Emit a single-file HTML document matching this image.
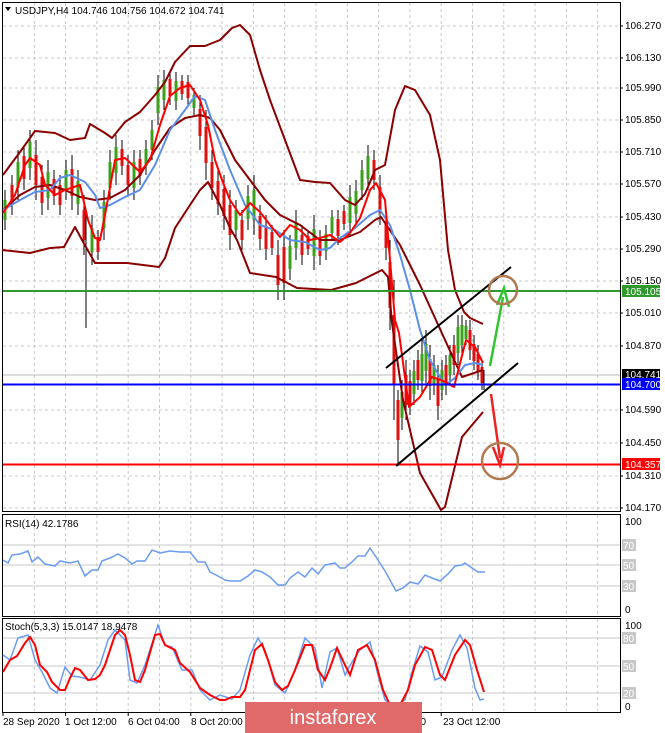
<!DOCTYPE html>
<html><head><meta charset="utf-8"><style>
html,body{margin:0;padding:0;background:#fff;width:665px;height:733px;overflow:hidden}
svg{display:block}
text{font-family:"Liberation Sans",sans-serif;font-size:10px;fill:#000}
</style></head><body>
<svg width="665" height="733" viewBox="0 0 665 733">
<!-- grid -->
<g stroke="#c8c8c8" stroke-dasharray="3,3" stroke-width="1">
<path d="M34.3 3V511M65.6 3V511M96.9 3V511M128.2 3V511M159.5 3V511M190.8 3V511M222.1 3V511M253.4 3V511M284.7 3V511M316 3V511M347.3 3V511M378.6 3V511M409.9 3V511M441.2 3V511M472.5 3V511M503.8 3V511M535.1 3V511M566.4 3V511M597.7 3V511"/>
<path d="M34.3 515V615M65.6 515V615M96.9 515V615M128.2 515V615M159.5 515V615M190.8 515V615M222.1 515V615M253.4 515V615M284.7 515V615M316 515V615M347.3 515V615M378.6 515V615M409.9 515V615M441.2 515V615M472.5 515V615M503.8 515V615M535.1 515V615M566.4 515V615M597.7 515V615"/>
<path d="M34.3 619V711M65.6 619V711M96.9 619V711M128.2 619V711M159.5 619V711M190.8 619V711M222.1 619V711M253.4 619V711M284.7 619V711M316 619V711M347.3 619V711M378.6 619V711M409.9 619V711M441.2 619V711M472.5 619V711M503.8 619V711M535.1 619V711M566.4 619V711M597.7 619V711"/>
<path d="M3 26H620M3 58H620M3 88H620M3 120H620M3 152H620M3 184H620M3 217H620M3 249H620M3 281H620M3 313H620M3 346H620M3 410H620M3 443H620M3 476H620M3 508H620"/>
</g>
<g stroke="#c8c8c8" stroke-width="1">
<path d="M3 545H620M3 565H620M3 586H620M3 638H620M3 666H620M3 693H620"/>
<path d="M3 375H620" stroke="#bbb"/>
</g>
<!-- frames -->
<g fill="none" stroke="#000" stroke-width="1">
<path d="M2.5 2.5H620.5V511.5H2.5Z"/>
<path d="M2.5 514.5H620.5V616.5H2.5Z"/>
<path d="M2.5 618.5H620.5V712.5H2.5Z"/>
</g>
<!-- candles -->
<g stroke="#000" stroke-width="1" fill="none">
<path d="M5 190V230M12 175V215M18 150V200M24 145V190M30 130V180M36 140V200M42 165V215M48 160V210M54 170V205M60 175V215M66 160V200M72 155V210M78 170V215M84 195V255M86 210V328M92 215V265M98 230V260M104 190V240M110 150V200M116 135V185M122 140V175M128 155V195M134 150V200M140 150V185M146 140V175M152 120V160M158 75V125M164 70V110M170 70V105M176 72V110M182 75V100M188 75V105M194 88V115M200 95V150M206 110V180M212 150V200M218 170V215M224 175V230M230 190V250M236 200V240M242 210V250M248 185V230M254 175V235M260 205V250M266 215V260M272 225V255M278 240V300M284 230V300M290 235V280M296 210V260M302 225V265M308 230V255M314 215V270M320 230V265M326 225V260M332 210V240M338 210V245M344 205V230M350 185V235M356 180V225M362 160V200M368 145V190M374 150V190M380 175V225M386 210V260M390 240V330M394 280V420M398 390V466M402 380V430M406 360V420M410 370V415M414 360V405M418 350V390M422 340V395M426 330V385M430 345V400M434 355V395M438 365V420M442 360V400M446 355V395M450 345V385M454 335V375M458 315V365M462 315V355M466 320V345M470 320V360M474 335V370M478 345V380M482 360V390M484 370V390"/>
</g>
<g stroke-width="3" fill="none">
<path stroke="#3aa21a" d="M5 200V220M18 162V188M30 142V168M48 172V198M66 170V190M78 181V204M92 228V252M104 202V228M110 162V188M116 147V173M134 162V188M146 149V166M152 130V150M158 87V113M164 80V100M176 81V101M194 95V108M236 210V230M248 196V219M254 190V220M290 246V269M296 222V248M314 229V256M326 234V251M332 217V233M350 197V223M356 191V214M362 170V190M368 156V179M402 392V418M414 371V394M422 354V381M426 344V371M434 365V385M442 370V390M450 355V375M458 327V353M462 325V345M466 326V339"/>
<path stroke="#e01010" d="M12 185V205M24 156V179M36 155V185M42 177V203M54 179V196M60 185V205M72 169V196M84 210V240M98 237V252M122 149V166M128 165V185M140 159V176M170 79V96M182 81V94M188 82V98M200 109V136M206 127V163M212 162V188M218 181V204M224 189V216M230 205V235M242 220V240M260 216V239M266 226V249M272 232V248M278 255V285M284 247V283M302 235V255M308 236V249M320 239V256M338 219V236M344 211V224M374 160V180M380 187V213M386 222V248M390 262V308M394 315V385M398 400V440M406 375V405M410 381V404M418 360V380M430 359V386M438 379V406M446 365V385M454 345V365M470 330V350M474 344V361M478 354V371M482 367V383"/>
</g>
<!-- bollinger -->
<g fill="none" stroke="#8b0000" stroke-width="2" stroke-linejoin="round">
<path d="M3 175L20 152L35 131L55 133L70 140L85 138L90 124L105 133L112 138L125 122L140 112L155 95L165 82L175 62L190 46L205 46L220 40L232 28L240 25L250 35L260 70L270 100L285 140L300 180L315 182L330 183L345 200L355 205L365 194L375 170L385 165L395 110L405 86L415 90L430 115L440 160L448 250L455 290L464 312L470 318L483 324"/>
<path d="M3 210L20 195L35 187L50 185L65 190L80 197L95 200L110 198L125 190L140 175L155 150L170 128L185 118L200 115L210 118L220 130L235 160L250 180L265 200L280 215L300 225L320 240L340 240L360 232L375 220L381 217L400 245L420 285L445 340L462 377L483 370"/>
<path d="M2 250L30 253L50 248L64 247L75 227L82 240L95 263L127 263L159 267L165 258L175 228L190 205L200 190L208 182L220 205L230 228L237 240L250 273L276 277L297 288L331 290L356 283L382 270L388 277L392 323L403 400L420 473L441 510L445 507L462 437L483 412"/>
</g>
<!-- MAs -->
<path fill="none" stroke="#5b8fe8" stroke-width="2" stroke-linejoin="round" d="M3 210L20 200L35 192L50 190L60 178L70 175L85 182L95 195L100 208L110 205L125 197L140 190L155 165L170 130L185 110L195 96L205 100L215 130L230 170L245 205L260 225L275 230L290 240L305 242L320 250L330 248L340 238L355 228L370 215L380 210L390 225L400 255L410 290L420 330L430 360L437 372L445 385L455 378L465 365L475 363L483 365"/>
<path fill="none" stroke="#ff0000" stroke-width="2" stroke-linejoin="round" d="M3 213L15 195L25 165L30 158L40 165L45 185L55 195L65 190L80 185L88 220L95 238L100 240L105 215L115 160L125 158L140 172L150 160L160 125L170 96L180 88L190 85L200 100L208 125L215 160L222 180L230 200L240 215L250 203L260 212L270 225L280 237L290 225L300 230L310 240L320 238L330 235L340 242L350 233L360 218L370 190L376 183L385 200L390 260L395 320L399 333L409 407L420 397L432 377L441 380L454 387L466 340L475 347L483 363"/>
<!-- levels -->
<path d="M3 291H620" stroke="#2e9a2e" stroke-width="2"/>
<path d="M3 384.5H620" stroke="#0000ff" stroke-width="2"/>
<path d="M3 464.5H620" stroke="#ff0000" stroke-width="2"/>
<!-- channel -->
<path d="M386 368L511 267M396 466L518 363" stroke="#000" stroke-width="2"/>
<!-- arrows -->
<path d="M490 366L503 297" stroke="#33c433" stroke-width="2.5"/>
<path d="M497 305L504 288L509 307" fill="none" stroke="#33c433" stroke-width="2.5"/>
<path d="M491 394L500 458" stroke="#ee2222" stroke-width="2.5"/>
<path d="M493 447L500 465L504 447" fill="none" stroke="#ee2222" stroke-width="2.5"/>
<circle cx="503" cy="290" r="14" fill="none" stroke="#b07a50" stroke-width="2.5"/>
<circle cx="500" cy="461" r="18" fill="none" stroke="#b07a50" stroke-width="2.5"/>
<!-- RSI -->
<path fill="none" stroke="#6a9cf0" stroke-width="1.5" d="M3 560L8 563L12 555L20 554L28 551L32 562L38 557L45 564L55 566L60 561L70 563L78 561L85 576L92 570L98 570L102 561L110 558L118 554L125 558L132 564L137 561L145 561L152 550L160 553L170 551L180 552L190 552L198 562L205 562L210 572L218 576L225 580L230 581L240 581L248 576L255 570L262 572L270 577L278 585L285 585L290 578L298 572L305 577L312 568L318 574L325 565L335 563L340 568L345 568L352 562L358 556L365 556L370 548L378 560L385 571L390 580L396 591L403 588L410 582L418 584L425 575L432 578L440 581L448 574L455 566L462 565L465 563L472 568L478 572L485 572"/>
<!-- Stoch -->
<path fill="none" stroke="#6a9cf0" stroke-width="1.5" d="M3 655L10 660L18 638L28 635L35 660L42 672L50 688L57 693L65 667L72 676L80 677L90 680L100 665L108 640L115 630L125 640L130 680L137 683L145 665L158 625L165 645L172 647L182 670L192 670L200 690L210 700L220 695L232 699L240 690L250 655L258 638L265 650L275 685L285 693L295 670L305 638L315 648L322 688L330 652L337 648L345 675L352 662L360 650L370 642L378 675L385 700L395 706L405 700L412 672L420 646L428 652L435 680L442 677L452 650L460 635L467 648L475 688L480 700L484 699"/>
<path fill="none" stroke="#ff0000" stroke-width="2" d="M3 672L10 660L17 656L25 643L30 637L35 645L40 665L47 672L52 682L60 690L65 690L70 678L75 668L80 670L88 680L95 679L100 675L105 665L110 650L115 635L120 630L125 635L130 655L135 680L140 682L145 670L155 635L160 634L165 645L175 650L180 663L190 672L200 688L210 695L220 700L225 700L232 697L240 697L245 690L255 650L262 644L268 660L275 682L282 690L288 686L295 670L305 645L312 645L318 670L325 680L330 668L337 648L345 665L350 675L358 650L367 645L375 660L383 690L390 705L400 705L408 690L415 665L425 647L432 650L440 675L445 680L455 655L465 640L470 645L477 670L484 692"/>
<!-- header -->
<path d="M5 7H11L8 11Z" fill="#000"/>
<text x="15" y="14">USDJPY,H4  104.746 104.756 104.672 104.741</text>
<text x="5" y="527">RSI(14) 42.1786</text>
<text x="5" y="630">Stoch(5,3,3) 15.0147 18.9478</text>
<!-- price axis -->
<g>
<text x="625" y="29">106.270</text><text x="625" y="61">106.130</text><text x="625" y="91">105.990</text>
<text x="625" y="123">105.850</text><text x="625" y="155">105.710</text><text x="625" y="187">105.570</text>
<text x="625" y="220">105.430</text><text x="625" y="252">105.290</text><text x="625" y="284">105.150</text>
<text x="625" y="316">105.010</text><text x="625" y="349">104.870</text><text x="625" y="413">104.590</text>
<text x="625" y="446">104.450</text><text x="625" y="479">104.310</text><text x="625" y="511">104.170</text>
</g>
<path d="M620 26h3M620 58h3M620 88h3M620 120h3M620 152h3M620 184h3M620 217h3M620 249h3M620 281h3M620 313h3M620 346h3M620 410h3M620 443h3M620 476h3M620 508h3" stroke="#000"/>
<rect x="622" y="285" width="38" height="12" fill="#2e9a2e"/><text x="625" y="295" style="fill:#fff">105.105</text>
<rect x="622" y="369" width="38" height="11" fill="#000"/><text x="625" y="378" style="fill:#fff">104.741</text>
<rect x="622" y="378" width="38" height="12" fill="#0000ff"/><text x="625" y="388" style="fill:#fff">104.700</text>
<rect x="622" y="458" width="38" height="12" fill="#ff0000"/><text x="625" y="468" style="fill:#fff">104.357</text>
<text x="625" y="525">100</text><text x="625" y="613">0</text>
<rect x="622" y="539" width="14" height="12" fill="#c8c8c8"/><text x="623" y="549" style="fill:#fff">70</text>
<rect x="622" y="559" width="14" height="12" fill="#c8c8c8"/><text x="623" y="569" style="fill:#fff">50</text>
<rect x="622" y="580" width="14" height="12" fill="#c8c8c8"/><text x="623" y="590" style="fill:#fff">30</text>
<text x="625" y="629">100</text><text x="625" y="710">0</text>
<rect x="622" y="632" width="14" height="12" fill="#c8c8c8"/><text x="623" y="642" style="fill:#fff">80</text>
<rect x="622" y="660" width="14" height="12" fill="#c8c8c8"/><text x="623" y="670" style="fill:#fff">50</text>
<rect x="622" y="687" width="14" height="12" fill="#c8c8c8"/><text x="623" y="697" style="fill:#fff">20</text>
<!-- time axis -->
<path d="M3 713v3M65.6 713v3M128.2 713v3M190.8 713v3M441.2 713v3" stroke="#000"/>
<text x="3" y="725">28 Sep 2020</text><text x="65" y="725">1 Oct 12:00</text>
<text x="128" y="725">6 Oct 04:00</text><text x="191" y="725">8 Oct 20:00</text>
<text x="415" y="725">00</text><text x="443" y="725">23 Oct 12:00</text>
<!-- banner -->
<rect x="245" y="702" width="177" height="31" fill="#e06a6a"/>
<text x="333" y="724" text-anchor="middle" style="fill:#fff;font-size:20px">instaforex</text>
</svg>
</body></html>
